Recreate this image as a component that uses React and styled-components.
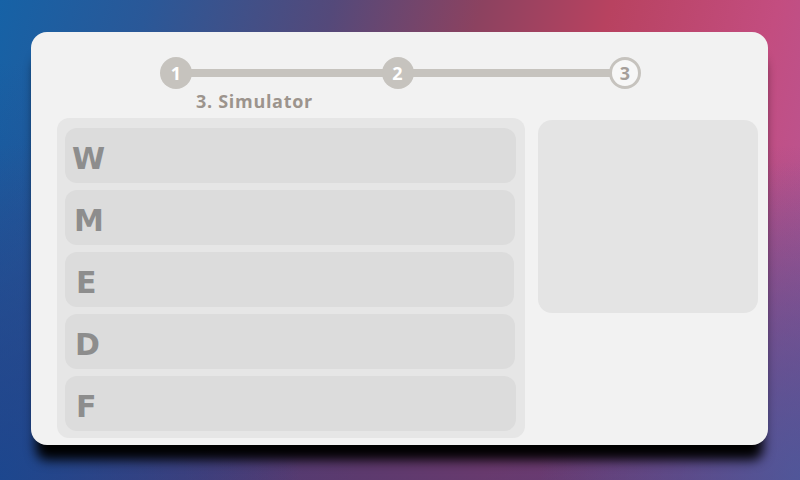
import styled, { createGlobalStyle } from "styled-components"

const GlobalStyle = createGlobalStyle`
  html, body {
    margin: 0;
    padding: 0;
    width: 800px;
    height: 480px;
    overflow: hidden;
  }
  body {
    font-family: "Open Sans", "Liberation Sans", sans-serif;
    background:
      radial-gradient(ellipse 260px 320px at 800px 480px, rgba(75, 92, 160, 0.8), rgba(75, 92, 160, 0)),
      radial-gradient(ellipse 300px 420px at 0px 480px, rgba(22, 72, 145, 0.85), rgba(22, 72, 145, 0)),
      linear-gradient(to bottom, rgba(70, 55, 120, 0) 30%, rgba(75, 55, 115, 0.75) 100%),
      linear-gradient(105deg, #1662a6 0%, #2a5898 16%, #54497a 36%, #8c4260 52%, #b84260 66%, #c34d80 84%, #b45a9e 100%);
  }
`

const Screen = styled.div`
  width: 800px;
  height: 480px;
  box-sizing: border-box;
  padding: 32px 32px 35px 31px;
`

const Card = styled.div`
  width: 737px;
  height: 413px;
  box-sizing: border-box;
  background: #f2f2f2;
  border-radius: 16px;
  box-shadow: 0 20px 12px -5px rgba(0, 0, 0, 1);
  padding: 25px 10px 7px 26px;
  display: flex;
  flex-direction: column;
`

const Stepper = styled.div`
  position: relative;
  width: 481px;
  margin-left: 103px;
  display: flex;
  justify-content: space-between;
  align-items: center;
`

const Track = styled.div`
  position: absolute;
  left: 16px;
  right: 16px;
  top: 12px;
  height: 8px;
  background: #c6c3be;
`

const Step = styled.div`
  position: relative;
  width: 32px;
  height: 32px;
  box-sizing: border-box;
  border-radius: 50%;
  display: flex;
  align-items: center;
  justify-content: center;
  font-weight: 700;
  font-size: 18px;
  background: ${p => (p.active ? "#f7f7f7" : "#c6c3be")};
  border: ${p => (p.active ? "3px solid #c6c3be" : "none")};
  color: ${p => (p.active ? "#a59f9a" : "#ffffff")};
  margin-left: ${p => p.shift || 0}px;
`

const StepLabel = styled.div`
  margin: 0 0 5px 139px;
  font-size: 18px;
  font-weight: 700;
  letter-spacing: 0.7px;
  color: #9c948d;
  line-height: 24px;
`

const Body = styled.div`
  display: grid;
  grid-template-columns: 468px 220px;
  column-gap: 13px;
  align-items: start;
`

const List = styled.div`
  background: #e6e6e6;
  border-radius: 12px;
  padding: 10px 9px 7px 8px;
  display: flex;
  flex-direction: column;
  gap: 7px;
`

const Row = styled.div`
  height: 55px;
  box-sizing: border-box;
  background: #dcdcdc;
  border-radius: 12px;
  display: flex;
  align-items: center;
  padding: 6px 0 0 ${p => p.indent}px;
  margin-right: ${p => p.trim || 0}px;
  font-family: "DejaVu Sans", "Liberation Sans", sans-serif;
  font-weight: 700;
  font-size: 30px;
  color: #8d8d8d;
`

const Preview = styled.div`
  margin-top: 2px;
  height: 193px;
  background: #e4e4e4;
  border-radius: 14px;
`

const rows = [
  { letter: "W", indent: 7, trim: 0 },
  { letter: "M", indent: 9, trim: 1 },
  { letter: "E", indent: 11, trim: 2 },
  { letter: "D", indent: 10, trim: 1 },
  { letter: "F", indent: 11, trim: 0 },
]

export default function App() {
  return (
    <>
      <GlobalStyle />
      <Screen>
        <Card>
          <Stepper>
            <Track />
            <Step>1</Step>
            <Step shift={-6}>2</Step>
            <Step active>3</Step>
          </Stepper>
          <StepLabel>3. Simulator</StepLabel>
          <Body>
            <List>
              {rows.map(r => (
                <Row key={r.letter} indent={r.indent} trim={r.trim}>
                  {r.letter}
                </Row>
              ))}
            </List>
            <Preview />
          </Body>
        </Card>
      </Screen>
    </>
  )
}
